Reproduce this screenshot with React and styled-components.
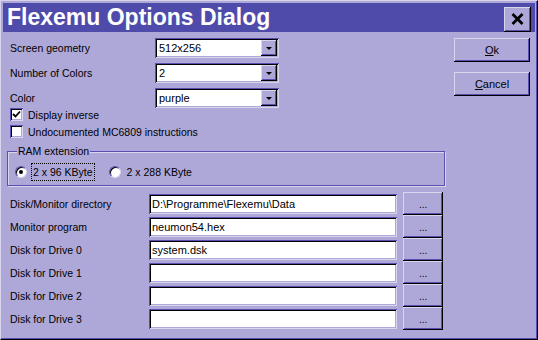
import React, { useState } from 'react';
import styled, { createGlobalStyle } from 'styled-components';

const FACE = '#aea8d9';
const LIGHT = '#d8d5ec';
const SHADOW = '#5a4eb1';
const DARK = '#000000';

const GlobalStyle = createGlobalStyle`
  html, body {
    margin: 0;
    padding: 0;
    background: ${FACE};
  }
  * {
    box-sizing: border-box;
  }
`;

const Window = styled.div`
  width: 538px;
  height: 340px;
  background: ${FACE};
  border: 1px solid;
  border-color: ${LIGHT} ${DARK} ${DARK} ${LIGHT};
  box-shadow: inset -1px -1px ${SHADOW};
  padding: 2px;
  display: flex;
  flex-direction: column;
  font-family: "Liberation Sans", Arial, sans-serif;
  font-size: 10.5px;
  color: #000;
`;

const TitleBar = styled.div`
  height: 29px;
  background: #4f4bab;
  display: flex;
  align-items: center;
  justify-content: space-between;
  padding: 0 4px 0 4px;
`;

const Title = styled.div`
  color: #fff;
  font-weight: bold;
  font-size: 23px;
  line-height: 29px;
`;

const raised = `
  box-shadow: inset -1px -1px ${DARK}, inset 1px 1px ${LIGHT}, inset -2px -2px ${SHADOW};
`;

const sunken = `
  box-shadow: inset 1px 1px ${SHADOW}, inset -1px -1px ${LIGHT}, inset 2px 2px ${DARK}, inset -2px -2px ${FACE};
`;

const CloseButton = styled.button`
  width: 27px;
  height: 25px;
  margin-top: 3px;
  border: none;
  padding: 0;
  background: ${FACE};
  ${raised}
  display: flex;
  align-items: center;
  justify-content: center;
`;

const Body = styled.div`
  flex: 1;
  display: flex;
  padding: 6px 0 0 5px;
`;

const LeftColumn = styled.div`
  width: 435px;
  display: flex;
  flex-direction: column;
`;

const RightColumn = styled.div`
  display: flex;
  flex-direction: column;
  gap: 10px;
  margin-left: 11px;
`;

const DialogButton = styled.button`
  width: 76px;
  height: 24px;
  border: none;
  background: ${FACE};
  ${raised}
  font-family: inherit;
  font-size: 11px;
  color: #000;
  padding: 0;

  u {
    text-decoration: underline;
  }
`;

const ComboList = styled.div`
  display: flex;
  flex-direction: column;
  gap: 5px;
  margin-bottom: -2px;
`;

const ComboRow = styled.div`
  display: flex;
  align-items: center;
  height: 20px;
`;

const Label = styled.span`
  width: ${(p) => p.$width}px;
  padding-left: 2px;
  flex-shrink: 0;
  white-space: nowrap;
`;

const Combo = styled.div`
  width: 124px;
  height: 20px;
  background: #fff;
  ${sunken}
  display: flex;
  align-items: center;
  padding: 2px;
`;

const ComboValue = styled.span`
  flex: 1;
  padding-left: 2px;
  font-size: 11px;
`;

const ComboArrow = styled.div`
  width: 16px;
  height: 16px;
  background: ${FACE};
  ${raised}
  display: flex;
  align-items: center;
  justify-content: center;

  &::after {
    content: '';
    border-left: 3px solid transparent;
    border-right: 3px solid transparent;
    border-top: 3px solid #000;
  }
`;

const CheckRow = styled.label`
  display: flex;
  align-items: center;
  height: 17px;
  padding-left: 2px;
  gap: 5px;
`;

const CheckBox = styled.span`
  width: 13px;
  height: 13px;
  background: #fff;
  ${sunken}
  display: flex;
  align-items: center;
  justify-content: center;
`;

const GroupBox = styled.fieldset`
  margin: 5px 0 0 -1px;
  width: 438px;
  border: 1px solid ${SHADOW};
  box-shadow: 1px 1px ${LIGHT}, inset 1px 1px ${LIGHT};
  padding: 5px 7px 4px 7px;
`;

const Legend = styled.legend`
  margin-left: 2px;
  padding: 0 1px;
  line-height: 13px;
  background: ${FACE};
`;

const RadioRow = styled.div`
  display: flex;
  align-items: center;
  height: 18px;
`;

const RadioOption = styled.label`
  display: flex;
  align-items: center;
  gap: 4px;
  margin-right: ${(p) => p.$gap}px;
`;

const RadioCircle = styled.span`
  width: 12px;
  height: 12px;
  border-radius: 50%;
  background: #fff;
  border: 1px solid;
  border-color: ${SHADOW} ${LIGHT} ${LIGHT} ${SHADOW};
  box-shadow: inset 1px 1px ${DARK};
  display: flex;
  align-items: center;
  justify-content: center;

  &::after {
    content: '';
    width: 4px;
    height: 4px;
    border-radius: 50%;
    background: ${(p) => (p.$checked ? '#000' : 'transparent')};
  }
`;

const RadioText = styled.span`
  padding: 1px 1px;
  border: 1px dotted ${(p) => (p.$focused ? '#000' : 'transparent')};
  line-height: 14px;
`;

const PathList = styled.div`
  margin-top: 6px;
  display: flex;
  flex-direction: column;
`;

const PathRow = styled.div`
  display: flex;
  align-items: center;
  height: 23px;
`;

const TextField = styled.div`
  width: 250px;
  height: 20px;
  background: #fff;
  ${sunken}
  padding: 0 3px;
  display: flex;
  align-items: center;
  font-size: 11px;
  white-space: nowrap;
`;

const BrowseButton = styled.button`
  width: 40px;
  height: 23px;
  margin-left: 6px;
  border: none;
  background: ${FACE};
  ${raised}
  font-family: inherit;
  font-size: 10px;
  padding: 2px 0 0 0;
  color: #000;
`;

const combos = [
  { label: 'Screen geometry', value: '512x256' },
  { label: 'Number of Colors', value: '2' },
  { label: 'Color', value: 'purple' },
];

const paths = [
  { label: 'Disk/Monitor directory', value: 'D:\\Programme\\Flexemu\\Data' },
  { label: 'Monitor program', value: 'neumon54.hex' },
  { label: 'Disk for Drive 0', value: 'system.dsk' },
  { label: 'Disk for Drive 1', value: '' },
  { label: 'Disk for Drive 2', value: '' },
  { label: 'Disk for Drive 3', value: '' },
];

function CheckMark() {
  return (
    <svg width="9" height="9" viewBox="0 0 9 9">
      <path d="M1 4 L3.5 6.5 L8 1.5" stroke="#000" strokeWidth="1.8" fill="none" />
    </svg>
  );
}

function App() {
  const [inverse, setInverse] = useState(true);
  const [undocumented, setUndocumented] = useState(false);
  const [ram, setRam] = useState(96);

  return (
    <>
      <GlobalStyle />
      <Window>
        <TitleBar>
          <Title>Flexemu Options Dialog</Title>
          <CloseButton>
            <svg width="13" height="12" viewBox="0 0 13 12">
              <path d="M1.5 1 L11.5 11 M11.5 1 L1.5 11" stroke="#000" strokeWidth="2.8" />
            </svg>
          </CloseButton>
        </TitleBar>
        <Body>
          <LeftColumn>
            <ComboList>
              {combos.map((c) => (
                <ComboRow key={c.label}>
                  <Label $width={147}>{c.label}</Label>
                  <Combo>
                    <ComboValue>{c.value}</ComboValue>
                    <ComboArrow />
                  </Combo>
                </ComboRow>
              ))}
            </ComboList>
            <CheckRow onClick={() => setInverse(!inverse)}>
              <CheckBox>{inverse && <CheckMark />}</CheckBox>
              Display inverse
            </CheckRow>
            <CheckRow onClick={() => setUndocumented(!undocumented)}>
              <CheckBox>{undocumented && <CheckMark />}</CheckBox>
              Undocumented MC6809 instructions
            </CheckRow>
            <GroupBox>
              <Legend>RAM extension</Legend>
              <RadioRow>
                <RadioOption $gap={14} onClick={() => setRam(96)}>
                  <RadioCircle $checked={ram === 96} />
                  <RadioText $focused={ram === 96}>2 x 96 KByte</RadioText>
                </RadioOption>
                <RadioOption $gap={0} onClick={() => setRam(288)}>
                  <RadioCircle $checked={ram === 288} />
                  <RadioText $focused={ram === 288}>2 x 288 KByte</RadioText>
                </RadioOption>
              </RadioRow>
            </GroupBox>
            <PathList>
              {paths.map((p) => (
                <PathRow key={p.label}>
                  <Label $width={141}>{p.label}</Label>
                  <TextField>{p.value}</TextField>
                  <BrowseButton>...</BrowseButton>
                </PathRow>
              ))}
            </PathList>
          </LeftColumn>
          <RightColumn>
            <DialogButton>
              <u>O</u>k
            </DialogButton>
            <DialogButton>
              <u>C</u>ancel
            </DialogButton>
          </RightColumn>
        </Body>
      </Window>
    </>
  );
}

export default App;
